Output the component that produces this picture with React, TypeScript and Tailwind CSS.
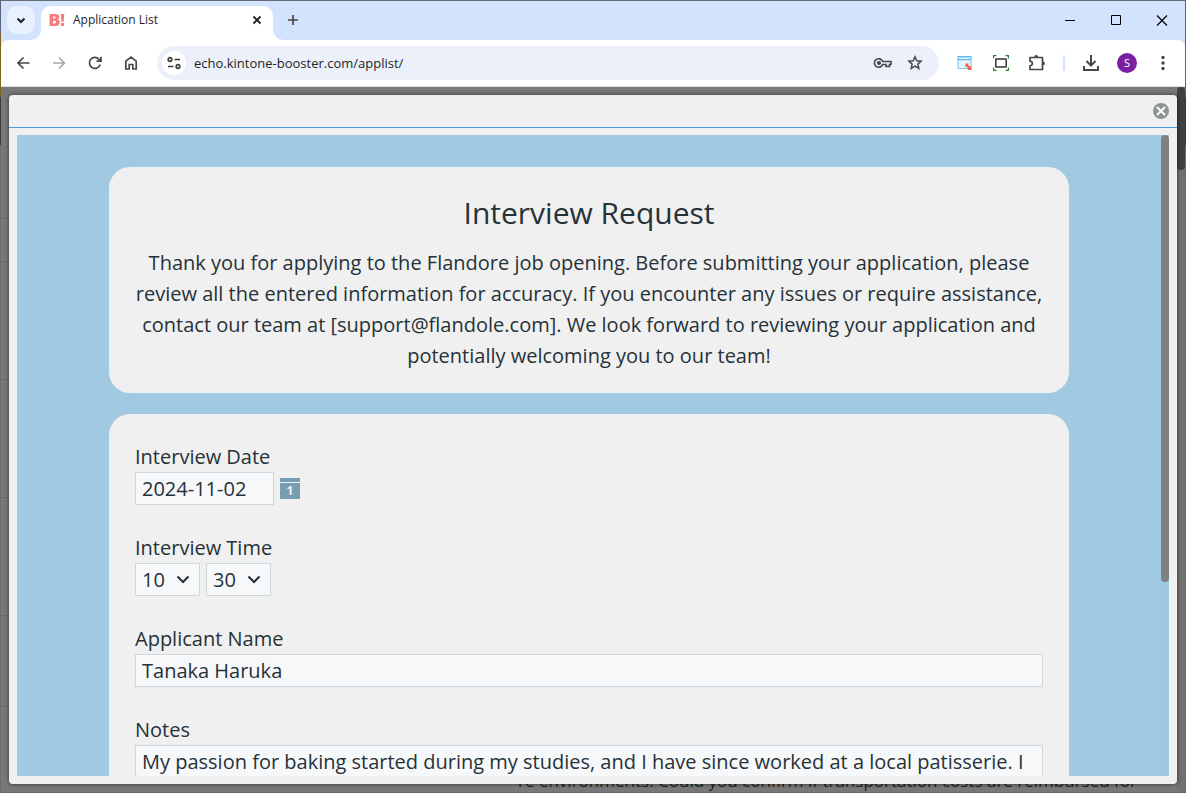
import type { ReactNode } from "react";

const HOURS = ["09", "10", "11", "13", "14"];
const MINUTES = ["00", "15", "30", "45"];

function IconButton({ label, className = "", children }: { label: string; className?: string; children: ReactNode }) {
  return (
    <button type="button" aria-label={label} className={`flex items-center justify-center shrink-0 ${className}`}>
      {children}
    </button>
  );
}

function Stroke({ d, size = 16, width = 2, color = "#474747" }: { d: string; size?: number; width?: number; color?: string }) {
  return (
    <svg width={size} height={size} viewBox="0 0 16 16" fill="none" stroke={color} strokeWidth={width} className="shrink-0">
      <path d={d} />
    </svg>
  );
}

function TabStrip() {
  return (
    <div className="flex h-[39px] bg-[#d3e3fd]">
      <IconButton label="Search tabs" className="mt-[5px] ml-1.5 w-7 h-7 rounded-[10px] bg-[#e9f1fe]">
        <Stroke d="M4.5 6.5 8 10l3.5-3.5" color="#1f1f1f" />
      </IconButton>
      <div className="relative flex items-center w-[232px] ml-1.5 mt-[5px] px-2 rounded-t-[10px] bg-white">
        <svg width="16" height="16" viewBox="0 0 16 16" className="shrink-0 -mt-1.5">
          <path
            fillRule="evenodd"
            fill="#f87c7c"
            d="M.5 2h6c2.4 0 3.8 1.1 3.8 3 0 1.2-.6 2-1.5 2.5 1.3.5 2 1.4 2 2.8 0 2.100-1.500 3.700-4 3.700H.5zm3.500 2.400v2.100h1.700c1.400 0 1.400-2.100 0-2.100zm0 4.400v2.700h2c1.600 0 1.600-2.700 0-2.700z"
          />
          <path fill="#f87c7c" d="M11.8 2h3.500l-.6 7.800h-2.300zM12 11h3v3h-3z" />
        </svg>
        <span className="ml-2 -mt-1.5 text-[12px] leading-4 text-[#1f1f1f]">Application List</span>
        <IconButton label="Close tab" className="ml-auto -mt-1.5 w-4 h-4">
          <Stroke d="m4.500 4.500 7 7m0-7-7 7" width={1.8} color="#1f1f1f" />
        </IconButton>
        <svg width="10" height="10" className="absolute -left-2.5 bottom-0" fill="#fff">
          <path d="M10 0v10H0A10 10 0 0 0 10 0" />
        </svg>
        <svg width="10" height="10" className="absolute -right-2.5 bottom-0" fill="#fff">
          <path d="M0 0v10h10A10 10 0 0 1 0 0" />
        </svg>
      </div>
      <IconButton label="New tab" className="mt-[5px] ml-1.5 w-7 h-7">
        <Stroke d="M8 3v10M3 8h10" width={1.7} />
      </IconButton>
      <div className="ml-auto flex">
        <IconButton label="Minimize" className="w-[46px]">
          <Stroke d="M3 7.500h10" width={1} color="#000" />
        </IconButton>
        <IconButton label="Maximize" className="w-[46px]">
          <Stroke d="M3.500 2.500h9v9h-9z" width={1} color="#000" />
        </IconButton>
        <IconButton label="Close" className="w-[46px]">
          <Stroke d="m3 2.500 10 10m0-10-10 10" width={1.2} color="#000" />
        </IconButton>
      </div>
    </div>
  );
}

function Toolbar() {
  return (
    <div className="bg-[#d3e3fd]">
      <div className="flex items-center h-[47px] px-3.5 rounded-t-[8px] bg-white border-b border-[#dcdcdc]">
        <div className="flex gap-5">
          <IconButton label="Back" className="w-4 h-4">
            <Stroke d="M14.500 8H3m5.500-5.500L3 8l5.500 5.500" width={1.7} />
          </IconButton>
          <IconButton label="Forward" className="w-4 h-4">
            <Stroke d="M2 8h11.500M8 2.500 13.500 8 8 13.500" width={1.7} color="#a8a8a8" />
          </IconButton>
          <IconButton label="Reload" className="w-4 h-4">
            <Stroke d="M13.200 9.500A5.500 5.500 0 1 1 12 4.200l1.500 1.600M14 1.800v4.400H9.600" width={1.7} />
          </IconButton>
          <IconButton label="Home" className="w-4 h-4">
            <Stroke d="M2.800 6.200 8 2l5.200 4.200V14h-3.400V9.500H6.200V14H2.800z" width={1.7} />
          </IconButton>
        </div>
        <div className="flex flex-1 items-center h-[34px] ml-[18px] pl-[5px] pr-4 rounded-full bg-[#ebf0fa]">
          <IconButton label="View site information" className="w-6 h-6 rounded-full bg-white">
            <svg width="14" height="14" viewBox="0 0 14 14" fill="none" stroke="#3c3c3c" strokeWidth="1.7">
              <circle cx="3" cy="3.5" r="1.8" />
              <path d="M7.500 3.500H13M1 10.500h5.500" />
              <circle cx="11" cy="10.5" r="1.8" />
            </svg>
          </IconButton>
          <input
            aria-label="Address"
            defaultValue="echo.kintone-booster.com/applist/"
            className="flex-1 min-w-0 ml-2 text-[13px] leading-5 bg-transparent text-[#1f1f1f] outline-none"
          />
          <IconButton label="Passwords" className="w-5 h-4">
            <svg width="20" height="16" viewBox="0 0 20 16" fill="none" stroke="#474747" strokeWidth="1.6">
              <path d="M9.700 6.500a4.300 4.300 0 1 0 0 3H13v2h3.500v-2H18v-3z" />
              <circle cx="6" cy="8" r="1.3" fill="#474747" />
            </svg>
          </IconButton>
          <IconButton label="Bookmark this tab" className="w-4 h-4 ml-3.5">
            <Stroke d="m8 1.800 1.800 4 4.300.4-3.200 2.900.9 4.300L8 11.200l-3.800 2.200.9-4.300-3.200-2.900 4.300-.4z" width={1.5} />
          </IconButton>
        </div>
        <div className="flex items-center ml-[18px] gap-5">
          <IconButton label="Web form extension" className="w-4 h-4">
            <svg width="16" height="16" viewBox="0 0 16 16" fill="none">
              <path d="M1 1.500h13v12H1z" fill="#e6f4fc" stroke="#7cc4ef" />
              <path d="M.5 1h14v1.500H.5zM.5 4h14v1.300H.5z" fill="#5fb8ee" />
              <path d="M8.500 8.500h3.300l-.9.900 2.500 2.500 1-1V15h-4l1.200-1.200-2.500-2.500-1 1z" fill="#fa6045" />
            </svg>
          </IconButton>
          <IconButton label="Capture extension" className="w-4 h-4">
            <svg width="16" height="16" viewBox="0 0 16 16" fill="none">
              <path d="M.6 3.500V.6h2.900m9 0h2.900v2.900M.6 12.500v2.900h2.900m9 0h2.900v-2.900" stroke="#2e7d32" strokeWidth="1.2" />
              <rect x="2.8" y="4" width="10.4" height="8" rx=".6" stroke="#333" strokeWidth="1.5" />
            </svg>
          </IconButton>
          <IconButton label="Extensions" className="w-4 h-4">
            <svg width="18" height="18" viewBox="0 0 18 18" fill="none" className="shrink-0">
              <path
                d="M2 3.500h12.500v12H2v-3.700c3.200-.5 3.200-4.100 0-4.600z"
                stroke="#474747"
                strokeWidth="1.7"
                strokeLinejoin="round"
              />
              <path d="M6.300 3a1.900 1.900 0 0 1 3.800 0zM15 7.500a1.900 1.900 0 0 1 0 3.800z" fill="#474747" />
            </svg>
          </IconButton>
          <span className="w-0.5 h-4 -ml-0.5 rounded-full bg-[#d3e3fd]" />
        </div>
        <div className="flex items-center ml-[18px] gap-[18px]">
          <IconButton label="Downloads" className="w-4 h-4">
            <Stroke d="M8 0v10M3.500 6 8 10.500 12.500 6M1 11v4h14v-4" />
          </IconButton>
          <IconButton label="Profile" className="w-5 h-5 rounded-full bg-[#7b1fa2] text-white text-[11px]">S</IconButton>
          <IconButton label="Menu" className="w-4 h-4">
            <svg width="4" height="16" viewBox="0 0 4 16" fill="#474747">
              <circle cx="2" cy="2.5" r="1.7" />
              <circle cx="2" cy="8" r="1.7" />
              <circle cx="2" cy="13.5" r="1.7" />
            </svg>
          </IconButton>
        </div>
      </div>
    </div>
  );
}

const fieldBox = "border border-[#cdd8de] bg-[#f6f8fa] outline-none";

function TimeSelect({ label, value, options }: { label: string; value: string; options: string[] }) {
  return (
    <div className="relative">
      <select
        aria-label={label}
        defaultValue={value}
        className={`${fieldBox} block appearance-none w-[65px] h-[33px] pl-1.5 pr-6`}
      >
        {options.map((o) => (
          <option key={o}>{o}</option>
        ))}
      </select>
      <svg
        width="14"
        height="10"
        viewBox="0 0 14 10"
        fill="none"
        stroke="#263238"
        strokeWidth="2"
        className="absolute right-2.5 top-3 pointer-events-none"
      >
        <path d="m1.500 1.500 5.500 5.500 5.500-5.500" />
      </svg>
    </div>
  );
}

function InterviewForm() {
  return (
    <form className="w-full max-w-[960px] mx-auto pt-8 text-[20px] leading-[31px] text-[#263238]">
      <section className="rounded-[21px] bg-[#f0f0f0] px-[26px] pt-[22px] pb-[22px] text-center">
        <h1 className="text-[30px] leading-[48px]">Interview Request</h1>
        <p className="mt-2.5">
          Thank you for applying to the Flandore job opening. Before submitting your application, please
          <br />
          review all the entered information for accuracy. If you encounter any issues or require assistance,
          <br />
          contact our team at [support@flandole.com]. We look forward to reviewing your application and
          <br />
          potentially welcoming you to our team!
        </p>
      </section>

      <section className="mt-[21px] rounded-[21px] bg-[#f0f0f0] px-[26px] pt-[27px] pb-6">
        <label htmlFor="date" className="block">Interview Date</label>
        <div className="flex items-center gap-1.5">
          <input id="date" defaultValue="2024-11-02" className={`${fieldBox} w-[139px] h-[33px] px-1.5`} />
          <IconButton label="Pick a date" className="w-5 h-[22px]">
            <svg width="20" height="22" viewBox="0 0 20 22">
              <path fill="#769db1" d="M0 0h20v4H0zM0 5h20v16H0z" />
              <text x="10" y="17" fill="#efefef" fontSize="12" fontWeight="700" textAnchor="middle">1</text>
            </svg>
          </IconButton>
        </div>

        <fieldset className="mt-[27px]">
          <legend>Interview Time</legend>
          <div className="flex gap-1.5">
            <TimeSelect label="Hour" value="10" options={HOURS} />
            <TimeSelect label="Minute" value="30" options={MINUTES} />
          </div>
        </fieldset>

        <label htmlFor="name" className="block mt-[27px]">Applicant Name</label>
        <input id="name" defaultValue="Tanaka Haruka" className={`${fieldBox} block w-full h-[33px] px-1.5`} />

        <label htmlFor="notes" className="block mt-[27px]">Notes</label>
        <textarea
          id="notes"
          rows={4}
          defaultValue="My passion for baking started during my studies, and I have since worked at a local patisserie. I"
          className={`${fieldBox} block w-full px-1.5 resize-none`}
        />
      </section>
    </form>
  );
}

// Row borders of the list that stays visible beside the dialog
function ListGutter() {
  return (
    <div className="w-2 shrink-0 -mt-2 *:border-b *:border-[#6a6a6a]">
      <div className="h-[132px]" />
      <div className="h-[43px]" />
      <div className="h-[118px]" />
      <div className="h-[118px]" />
      <div className="h-[118px]" />
      <div className="h-[91px]" />
    </div>
  );
}

// One-pixel slice of whatever sits behind the browser window
function DesktopEdge() {
  return (
    <div className="flex flex-col w-px shrink-0 bg-[#6c6c6c]">
      <div className="h-8 bg-[#5c6373]" />
      <div className="h-16 bg-[#80661c]" />
      <div className="h-12 bg-[#3a3a3a]" />
    </div>
  );
}

export default function App() {
  return (
    <div className="flex h-screen overflow-hidden border-t border-[#666b75] font-['Open_Sans','Noto_Sans',sans-serif]">
      <DesktopEdge />
      <div className="flex flex-col flex-1 min-w-0 bg-[#787878] border-b border-[#6a6668]">
        <TabStrip />
        <Toolbar />
        <main className="relative flex flex-1 min-h-0 pt-2 pb-2">
          <ListGutter />
          <p className="absolute left-[517px] -bottom-px text-[17px] leading-6 text-[#1d2124] whitespace-nowrap">
            re environments. Could you confirm if transportation costs are reimbursed for
          </p>
          <div
            role="dialog"
            aria-label="Interview Request"
            className="relative flex flex-col flex-1 min-w-0 rounded bg-[#f0f0f0] shadow-[0_0_4px_rgba(0,0,0,0.6)]"
          >
            <div className="flex items-center justify-end h-[33px] shrink-0 px-2 border-b border-[#4a9fe8]">
              <IconButton label="Close dialog" className="w-4 h-4 rounded-full bg-[#8e9492]">
                <Stroke d="m4 4 8 8m0-8-8 8" color="#fff" />
              </IconButton>
            </div>
            <div className="flex flex-1 min-h-0 m-2 mt-[7px] bg-[#a1cae2]">
              <div className="flex-1 overflow-hidden">
                <InterviewForm />
              </div>
              <div className="w-2 rounded bg-[#9ec7e0]">
                <div className="h-[447px] rounded bg-[#808080]" />
              </div>
            </div>
          </div>
          <div className="w-2 shrink-0 -my-2 rounded bg-[#727272]">
            <div className="h-[83px] rounded bg-[#404040]" />
          </div>
        </main>
      </div>
      <DesktopEdge />
    </div>
  );
}
